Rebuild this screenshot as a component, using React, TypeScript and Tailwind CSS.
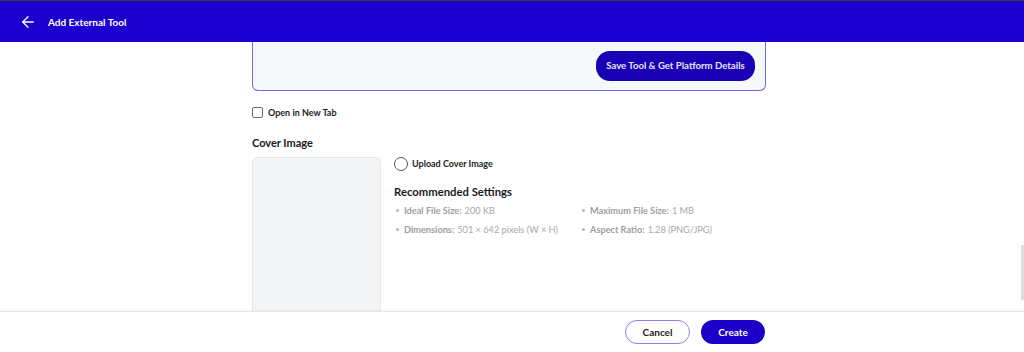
import { ArrowLeft } from 'lucide-react';

const settings = [
  { label: 'Ideal File Size:', value: '200 KB' },
  { label: 'Maximum File Size:', value: '1 MB' },
  { label: 'Dimensions:', value: '501 × 642 pixels (W × H)' },
  { label: 'Aspect Ratio:', value: '1.28 (PNG/JPG)' },
];

export default function App() {
  return (
    <div
      className="relative h-[352px] w-[1024px] flex flex-col overflow-hidden bg-white text-[#1f1f1f]"
      style={{ fontFamily: 'Lato, "Noto Sans", sans-serif' }}
    >
      {/* Header */}
      <div className="h-[1px] bg-[#3a3a3a]" />
      <header className="h-[41px] shrink-0 bg-[#1c00cf] flex items-center pl-[19px] text-white">
        <ArrowLeft className="w-[18px] h-[18px]" strokeWidth={1.75} />
        <span className="ml-[11px] text-[10px] font-bold leading-[14px]">Add External Tool</span>
      </header>

      {/* Body */}
      <main className="flex-1 overflow-hidden">
        <div className="ml-[252px] w-[514px]">
          {/* Platform card (scrolled) */}
          <div className="h-[49px] bg-[#f7f8fa] border-x border-b border-[#7466e6] rounded-b-[6px] flex items-end justify-end pr-[10px] pb-[9px]">
            <button className="h-[30px] w-[159px] rounded-[14px] bg-[#1a00b5] text-[#e6e4ff] text-[9.6px] font-bold leading-[14px]">
              Save Tool &amp; Get Platform Details
            </button>
          </div>

          {/* Open in new tab */}
          <label className="mt-[16px] h-[11px] flex items-center gap-[5px]">
            <span className="w-[11px] h-[11px] border border-[#6b6b6b] rounded-[2px] bg-white" />
            <span className="text-[9px] font-bold leading-[12px] text-[#222]">Open in New Tab</span>
          </label>

          {/* Cover image */}
          <div className="mt-[18px] text-[11px] font-bold leading-[14px] text-[#1a1a1a]">Cover Image</div>
          <div className="mt-[7px] flex">
            <div className="w-[129px] h-[170px] shrink-0 bg-[#f4f5f7] border border-[#e6e7ea] rounded-[5px]" />
            <div className="ml-[13px]">
              <div className="h-[14px] flex items-center gap-[4px]">
                <span className="w-[14px] h-[14px] rounded-full border border-[#555]" />
                <span className="text-[9px] font-bold leading-[12px] text-[#222]">Upload Cover Image</span>
              </div>
              <div className="mt-[14px] text-[11.3px] font-bold leading-[14px] text-[#1a1a1a]">Recommended Settings</div>
              <ul className="mt-[5px] grid grid-cols-[186px_200px] gap-y-[6px] text-[9.2px] text-[#a8a8a8]">
                {settings.map((s) => (
                  <li key={s.label} className="flex items-center leading-[13px]">
                    <span className="w-[3px] h-[3px] rounded-full bg-[#b5b5b5] ml-[2px] mr-[5px]" />
                    <span className="font-bold text-[#9e9e9e] mr-[3px]">{s.label}</span>
                    {s.value}
                  </li>
                ))}
              </ul>
            </div>
          </div>
        </div>
      </main>

      {/* Footer */}
      <footer className="h-[41px] shrink-0 border-t border-[#e6e6e6] shadow-[0_-1px_2px_rgba(0,0,0,0.04)] bg-white flex items-center justify-end pr-[259px] gap-[11px]">
        <button className="h-[24px] w-[65px] rounded-full border border-[#8d80ee] text-[10px] font-bold text-[#222] bg-white">
          Cancel
        </button>
        <button className="h-[24px] w-[64px] rounded-full bg-[#1c00c9] text-[10px] font-bold text-white">
          Create
        </button>
      </footer>

      {/* Scrollbar thumb */}
      <div className="absolute right-0 top-[245px] w-[3px] h-[55px] bg-[#dedede]" />
    </div>
  );
}
